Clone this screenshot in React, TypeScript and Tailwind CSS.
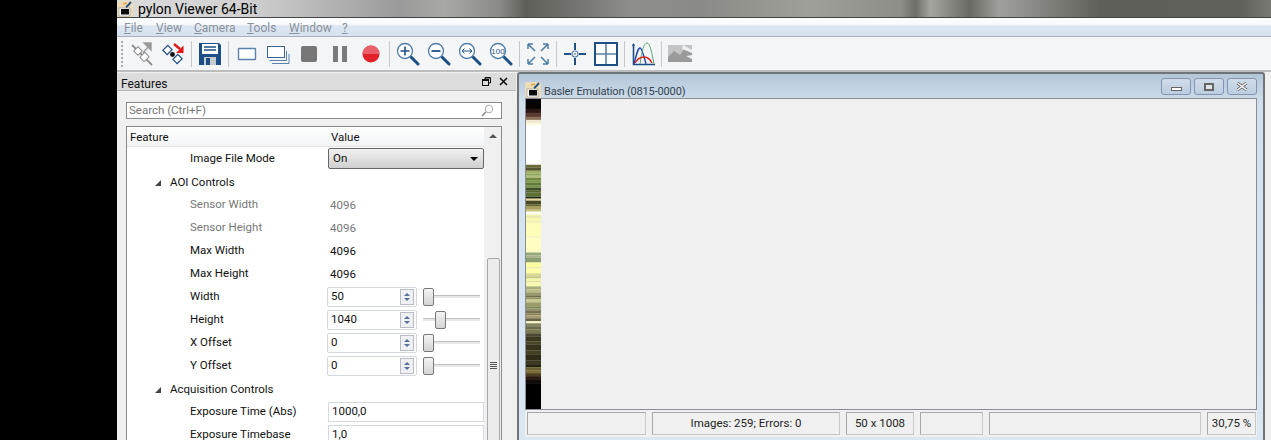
const font = "font-['Roboto','Noto_Sans',sans-serif]";

const stripBands: [number, number, string][] = [
	[0, 10, "#060303"], [10, 4, "#2a1612"], [14, 4, "#5a3a30"], [18, 3, "#8a6e58"], [21, 3, "#f0ead0"], [24, 2, "#fdfbd8"], [26, 40, "#ffffff"],
	[66, 3, "#6b6b3a"], [69, 3, "#55552e"], [72, 3, "#a0b068"], [75, 2, "#8fa458"], [77, 2, "#b0bc78"], [79, 3, "#6f8a40"], [82, 2, "#7f9848"], [84, 3, "#5f7a38"], [87, 2, "#7a9048"],
	[89, 3, "#3f4f25"], [92, 2, "#55652f"], [94, 4, "#5f7035"], [98, 2, "#222a14"], [100, 2, "#e8d8a0"], [102, 4, "#4a4a20"], [106, 2, "#6a6a30"], [108, 3, "#a8a058"], [111, 2, "#c8c078"],
	[113, 3, "#fffff0"], [116, 2, "#f0f2a8"], [118, 1, "#d8dc90"], [119, 4, "#f6f8b0"], [123, 1, "#e8eca0"], [124, 14, "#fdfdb8"], [138, 1, "#f4f4a8"], [139, 15, "#fefec0"],
	[154, 3, "#96a878"], [157, 2, "#a8b488"], [159, 5, "#8a9c70"], [164, 5, "#fbfba0"], [169, 1, "#e8e898"], [170, 5, "#fdfda8"], [175, 3, "#d8d890"], [178, 2, "#c4c884"], [180, 3, "#f4f4a8"], [183, 1, "#d4d48c"], [184, 4, "#f8f8b0"],
	[188, 3, "#a8ae78"], [191, 3, "#bcbc88"], [194, 3, "#969a68"], [197, 2, "#6f7048"], [199, 2, "#8f9060"], [201, 3, "#c8c88f"], [204, 4, "#9a9c68"], [208, 2, "#7c8850"], [210, 2, "#8e9468"],
	[212, 3, "#777050"], [215, 2, "#8a8258"], [217, 3, "#a89c70"], [220, 3, "#6a6448"], [223, 2, "#fafac8"], [225, 3, "#858460"], [228, 3, "#6a6a48"], [231, 4, "#7a7850"], [235, 3, "#4a4830"],
	[238, 5, "#3c3820"], [243, 3, "#4a4628"], [246, 6, "#36321c"], [252, 4, "#444024"], [256, 6, "#302c18"], [262, 4, "#3c3820"], [266, 3, "#24220f"], [269, 3, "#6a6030"], [272, 3, "#7c6c38"], [275, 3, "#4c3e20"], [278, 3, "#2a1a10"], [281, 4, "#120a06"], [285, 26, "#000000"],
];

const Sep = () => <div className="h-[26px] w-px mx-[6px] bg-[#c4c6c8]" />;

const Ic = ({ children }: { children: React.ReactNode }) => (
	<svg width="24" height="24" viewBox="0 0 24 24" fill="none" className="shrink-0">{children}</svg>
);

const ConnectOff = () => (
	<Ic>
		<path d="M2 3l20 20" stroke="#8f8f8f" strokeWidth="1.8" />
		<path d="M13 11l5-6M14 1h7v7z" stroke="#9a9a9a" strokeWidth="1.4" fill="#9a9a9a" />
		<rect x="5" y="6" width="6" height="6" transform="rotate(-45 8 9)" fill="#fff" stroke="#8a8a8a" />
		<rect x="11" y="12" width="7" height="6" transform="rotate(-45 14.5 15)" fill="#fff" stroke="#8a8a8a" />
	</Ic>
);
const ConnectOn = () => (
	<Ic>
		<rect x="3" y="5" width="7" height="6" transform="rotate(-45 6.5 8)" fill="#fff" stroke="#1d4f86" strokeWidth="1.2" />
		<rect x="13" y="14" width="7" height="6" transform="rotate(-45 16.5 17)" fill="#fff" stroke="#1d4f86" strokeWidth="1.2" />
		<circle cx="11.5" cy="12.5" r="2.4" fill="#111" />
		<path d="M13 2l6 5" stroke="#e01818" strokeWidth="2.4" />
		<path d="M22.5 3.5v7.5h-7.5z" fill="#e01818" />
	</Ic>
);
const Save = () => (
	<Ic>
		<path d="M1 1h20l2 2v20H1z" fill="#1c4f86" />
		<rect x="4" y="2" width="16" height="10" fill="#fff" />
		<path d="M6 5h12M6 8h12" stroke="#1c4f86" strokeWidth="1.5" />
		<rect x="6" y="15" width="12" height="8" fill="#c8ccd0" />
		<rect x="8" y="16" width="4" height="7" fill="#1c4f86" />
	</Ic>
);
const SingleRect = () => (
	<Ic><rect x="3.5" y="6.5" width="17" height="11" rx="0.5" fill="#fff" stroke="#5b82ab" strokeWidth="1.4" /></Ic>
);
const MultiRect = () => (
	<Ic>
		<path d="M3.5 18.5h17V9" stroke="#5b82ab" strokeWidth="1" />
		<path d="M6 21.5h17V12" stroke="#5b82ab" strokeWidth="1" />
		<rect x="1.5" y="4.5" width="17" height="11" fill="#fff" stroke="#39638f" />
	</Ic>
);
const Stop = () => <Ic><rect x="4" y="4" width="16" height="16" rx="2" fill="#777" /></Ic>;
const Pause = () => (
	<Ic>
		<rect x="5" y="4" width="5" height="16" fill="#7a7a7a" />
		<rect x="14" y="4" width="5" height="16" fill="#7a7a7a" />
	</Ic>
);
const Record = () => (
	<Ic>
		<circle cx="12" cy="12" r="8.5" fill="#e2212a" />
		<path d="M3.5 12a8.5 8.5 0 0 1 17 0z" fill="#ea5f6a" />
	</Ic>
);
const Lens = ({ children }: { children?: React.ReactNode }) => (
	<Ic>
		<path d="M15 15l7 7" stroke="#1c4f86" strokeWidth="3" strokeLinecap="round" />
		<circle cx="9" cy="9" r="7.5" fill="#fff" stroke="#4d7ca8" strokeWidth="1.3" />
		{children}
	</Ic>
);
const Expand = () => (
	<Ic>
		<g stroke="#4d7ca8" strokeWidth="1.5" fill="none">
			<path d="M2 2l7 7M2 2h5M2 2v5" />
			<path d="M22 2l-7 7M22 2h-5M22 2v5" />
			<path d="M2 22l7-7M2 22h5M2 22v-5" />
			<path d="M22 22l-7-7M22 22h-5M22 22v-5" />
		</g>
	</Ic>
);
const Cross = () => (
	<Ic>
		<path d="M1 12h7M16 12h7M12 1v7M12 16v7" stroke="#1c4f86" strokeWidth="2" />
		<circle cx="12" cy="12" r="3" stroke="#5b82ab" strokeWidth="1.2" />
		<circle cx="12" cy="12" r="0.8" fill="#1c4f86" />
	</Ic>
);
const Grid = () => (
	<Ic>
		<rect x="1" y="1" width="22" height="22" fill="#fff" stroke="#1c4f86" strokeWidth="2" />
		<path d="M12 2v20M2 12h20" stroke="#5b82ab" strokeWidth="1.6" />
	</Ic>
);
const Histogram = () => (
	<Ic>
		<path d="M2.5 2v20.5H24" stroke="#1c4f86" strokeWidth="1.6" />
		<path d="M1 4l1.5-3L4 4z" fill="#1c4f86" />
		<path d="M3 22C6 10 7 6 9 6s4 8 6 16" stroke="#1a3fb0" strokeWidth="1.3" />
		<path d="M9 22C11 8 13 1 16 1s5 10 7 21" stroke="#58a878" strokeWidth="1" />
		<path d="M4 21c3-5 6-6 9-6s6 2 8 6" stroke="#e01818" strokeWidth="1.3" />
	</Ic>
);
const PicDisabled = () => (
	<Ic>
		<rect x="0" y="3" width="24" height="17" fill="#c4c4c4" />
		<path d="M0 15l6-6 6 4 4-6 8 4v9H0z" fill="#9a9a9a" />
		<path d="M15 3l9 5v3l-10-4zM18 14l6-1v4z" fill="#efefef" />
	</Ic>
);
const ProgramIcon = () => (
	<svg width="16" height="16" viewBox="0 0 16 16" className="shrink-0">
		<rect width="16" height="16" rx="2" fill="#ecdcb8" />
		<rect x="2" y="7" width="11" height="8" fill="#fff" stroke="#777" strokeWidth="0.5" />
		<rect x="4" y="8" width="8" height="5.5" fill="#0a0a0a" />
		<path d="M9 6c2-1 3-3 5-5" stroke="#1c4f86" strokeWidth="2" fill="none" />
		<path d="M6 3l4-1" stroke="#e8a040" strokeWidth="1.5" />
	</svg>
);

const MenuItem = ({ k, rest, cls }: { k: string; rest: string; cls: string }) => (
	<span className={cls}><span className="underline">{k}</span>{rest}</span>
);

const Spin = ({ value, pos }: { value: string; pos: string }) => (
	<div className="flex items-center h-full -ml-px">
		<div className="flex items-center justify-between w-[90px] h-[20px] bg-white border border-[#d4d9df] rounded-[2px] pl-[3px] pr-[2px] text-[#111]">
			<span>{value}</span>
			<div className="flex flex-col w-[14px] h-[16px] border border-[#b8bcc4] bg-[#eef0f3] items-center justify-center gap-[2px]">
				<div className="w-0 h-0 border-x-[3px] border-x-transparent border-b-[3px] border-b-[#5a6f99]" />
				<div className="w-0 h-0 border-x-[3px] border-x-transparent border-t-[3px] border-t-[#5a6f99]" />
			</div>
		</div>
		<div className="relative ml-[6px] w-[57px] h-[18px]">
			<div className="absolute left-0 right-0 top-[7px] h-[3px] bg-[#e8e8e8] border-t border-[#c0c0c0]" />
			<div className={`absolute top-0 w-[11px] h-[18px] rounded-[2px] border border-[#777] bg-gradient-to-b from-[#f4f4f4] to-[#d4d4d4] ${pos}`} />
		</div>
	</div>
);

const Row = ({ label, gray, value }: { label: string; gray?: boolean; value?: React.ReactNode }) => (
	<div className="flex h-[23px] items-center">
		<div className={`w-[201px] pl-[63px] shrink-0 whitespace-nowrap ${gray ? "text-[#777]" : "text-[#111]"}`}>{label}</div>
		<div className={`h-full flex items-center ${gray ? "text-[#777]" : "text-[#111]"}`}>{value}</div>
	</div>
);

const Section = ({ label }: { label: string }) => (
	<div className="flex h-[23px] items-center pl-[28px] pt-[2px] gap-[9px] text-[#111]">
		<div className="w-0 h-0 border-l-[6px] border-l-transparent border-b-[6px] border-b-[#444]" />
		<span>{label}</span>
	</div>
);

const Pane = ({ w, children }: { w: string; children?: React.ReactNode }) => (
	<div className={`${w} shrink-0 h-[23px] border border-[#c8c8c8] border-t-[#a8a8a8] border-l-[#a8a8a8] flex items-center justify-center whitespace-nowrap`}>{children}</div>
);

const Input = ({ value }: { value: string }) => (
	<div className="w-[156px] h-[20px] bg-white border border-[#d4d9df] pl-[3px] flex items-center text-[#111]">{value}</div>
);

const winBtn = "w-[30px] h-[17px] rounded-[3px] border border-[#8493b4] bg-gradient-to-b from-[#d0dcea] to-[#bccde0] flex items-center justify-center";

export default function App() {
	return (
		<div className={`flex w-[1271px] h-[440px] overflow-hidden bg-black text-[11.5px] leading-none ${font}`}>
			<div className="w-[117px] shrink-0" />
			<div className="flex-1 flex flex-col min-w-0 bg-[#f0f0f0]">
				{/* Title bar */}
				<div className="h-[17px] flex items-center bg-[linear-gradient(to_right,#dcdcdc,#d0d0d0_11.5%,#9a9a9a_24.5%,#a8a8a4_28.4%,#8a8a86_33.2%,#5f5f5a_35.4%,#7a7a76_41%,#8e8e8a_44.5%,#8a8a86_50.5%,#a0a09a_60%,#8e8e88_67.9%,#6e6e68_69.2%,#a5a5a0_70.5%,#6a6a64_73.9%,#a0a09c_76.5%,#8a8a86_79.5%,#5e5f58_85.2%,#60605a_97.3%,#7a7a75)] border-b border-[#444] box-content">
					<ProgramIcon />
					<span className="ml-[5px] text-[14px] text-black">pylon Viewer 64-Bit</span>
				</div>
				{/* Menu */}
				<div className="h-[19px] flex items-center pl-[7px] pt-px text-[12px] text-[#8b929a] bg-[linear-gradient(#fbfcfe_0,#f8fafc_35%,#dce5f2_45%,#d8e2f0_100%)] border-b border-[#a8b0c0]">
					<MenuItem k="F" rest="ile" cls="w-[32px]" />
					<MenuItem k="V" rest="iew" cls="w-[38px]" />
					<MenuItem k="C" rest="amera" cls="w-[53px]" />
					<MenuItem k="T" rest="ools" cls="w-[42px]" />
					<MenuItem k="W" rest="indow" cls="w-[53px]" />
					<MenuItem k="?" rest="" cls="" />
				</div>
				{/* Toolbar */}
				<div className="h-[33px] flex items-center bg-[#f4f5f6] border-b-2 border-b-[#bcbcbc] box-content">
					<div className="ml-[4px] w-[2px] h-[26px] border-l-2 border-dotted border-[#aaa]" />
					<div className="ml-[7px] flex gap-[7px]"><ConnectOff /><ConnectOn /></div>
					<Sep />
					<Save />
					<Sep />
					<div className="flex gap-[7px]"><SingleRect /><MultiRect /><Stop /><Pause /><Record /></div>
					<Sep />
					<div className="flex gap-[7px]">
						<Lens><path d="M4.5 9h9M9 4.5v9" stroke="#1c4f86" strokeWidth="1.6" /></Lens>
						<Lens><path d="M4.5 9h9" stroke="#1c4f86" strokeWidth="1.8" /></Lens>
						<Lens><path d="M4 9h10M4 9l2.5-2.5M4 9l2.5 2.5M14 9l-2.5-2.5M14 9l-2.5 2.5" stroke="#1c4f86" strokeWidth="1" /></Lens>
						<Lens><text x="9" y="12" textAnchor="middle" fontSize="8" fill="#1c4f86" fontFamily="Liberation Sans, sans-serif">100</text></Lens>
					</div>
					<Sep />
					<Expand />
					<Sep />
					<div className="flex gap-[7px]"><Cross /><Grid /></div>
					<Sep />
					<Histogram />
					<Sep />
					<PicDisabled />
				</div>
				{/* Body */}
				<div className="flex-1 flex min-h-0">
					{/* Features panel */}
					<div className="w-[399px] shrink-0 flex flex-col">
						<div className="mt-px h-[17px] flex items-center justify-between bg-[#dcdcdc] border-b border-[#b8b8b8] pl-[4px] pr-[8px] box-content text-[12px] text-[#111]">
							<span className="pt-[4px]">Features</span>
							<div className="flex items-center gap-[8px]">
								<svg width="9" height="9" viewBox="0 0 9 9" fill="none" stroke="#111"><path d="M3 2.5V.5h5.5V6H6.5" /><rect x="0.5" y="2.5" width="6" height="6" /><path d="M3 1h5M1 3.5h5" /></svg>
								<svg width="9" height="9" viewBox="0 0 9 9" fill="none" stroke="#111" strokeWidth="1.6"><path d="M1 1l7 7M8 1l-7 7" /></svg>
							</div>
						</div>
						<div className="flex-1 flex flex-col pl-[9px] pr-[14px] pt-[11px] min-h-0">
							<div className="h-[17px] bg-white border border-[#8a8a8a] flex items-center justify-between pl-[2px] pr-[7px] text-[#777] shrink-0">
								<span>Search (Ctrl+F)</span>
								<svg width="13" height="13" viewBox="0 0 13 13" fill="none"><circle cx="8" cy="5" r="3.8" stroke="#aaa" /><path d="M5 8l-4 4" stroke="#888" strokeWidth="1.6" /></svg>
							</div>
							<div className="mt-[7px] flex-1 flex bg-[#fff] border border-[#8a8a8a] border-b-0 min-h-0 overflow-hidden">
								<div className="flex-1 min-w-0">
									<div className="h-[20px] flex items-center pt-[2px] bg-gradient-to-b from-[#fff] to-[#f2f4f6] border-b border-[#e4e4e4] text-[#111]">
										<span className="w-[201px] pl-[3px]">Feature</span>
										<span className="pl-[3px]">Value</span>
									</div>
									<Row label="Image File Mode" value={
										<div className="w-[156px] h-[21px] rounded-[2px] border border-[#666] bg-gradient-to-b from-[#f2f2f2] to-[#cfcfcf] flex items-center justify-between pl-[4px] pr-[5px]">
											<span>On</span>
											<div className="w-0 h-0 border-x-[4px] border-x-transparent border-t-[4px] border-t-black" />
										</div>
									} />
									<Section label="AOI Controls" />
									<Row gray label="Sensor Width" value={<span className="pl-[2px] pt-[2px]">4096</span>} />
									<Row gray label="Sensor Height" value={<span className="pl-[2px] pt-[2px]">4096</span>} />
									<Row label="Max Width" value={<span className="pl-[2px] pt-[2px]">4096</span>} />
									<Row label="Max Height" value={<span className="pl-[2px] pt-[2px]">4096</span>} />
									<Row label="Width" value={<Spin value="50" pos="left-0" />} />
									<Row label="Height" value={<Spin value="1040" pos="left-[12px]" />} />
									<Row label="X Offset" value={<Spin value="0" pos="left-0" />} />
									<Row label="Y Offset" value={<Spin value="0" pos="left-0" />} />
									<Section label="Acquisition Controls" />
									<Row label="Exposure Time (Abs)" value={<Input value="1000,0" />} />
									<Row label="Exposure Timebase" value={<Input value="1,0" />} />
								</div>
								{/* Scrollbar */}
								<div className="w-[17px] shrink-0 bg-[#f0f0f0] flex flex-col items-center relative">
									<div className="mt-[7px] w-0 h-0 border-x-[4px] border-x-transparent border-b-[4px] border-b-[#555]" />
									<div className="absolute top-[131px] left-[3px] right-[1px] h-[200px] bg-[#ececec] border border-[#a8a8a8] rounded-[2px] flex flex-col items-center pt-[103px] gap-px">
										<div className="w-[7px] h-px bg-[#555]" />
										<div className="w-[7px] h-px bg-[#555]" />
										<div className="w-[7px] h-px bg-[#555]" />
										<div className="w-[7px] h-px bg-[#555]" />
									</div>
								</div>
							</div>
						</div>
					</div>
					{/* MDI child window */}
					<div className="w-[748px] h-[368px] ml-px flex flex-col bg-[linear-gradient(#b3c6d8,#d2e0ee_30px,#dbe7f3)] border-2 border-b-0 border-[#6f7479] rounded-t-[3px] px-[6px] pb-[3px]">
						<div className="h-[24px] flex items-start shrink-0">
							<div className="mt-[8px] flex items-center">
								<ProgramIcon />
								<span className="ml-[3px] pt-[2px] text-[11px] tracking-[-0.15px] text-[#34424f]">Basler Emulation (0815-0000)</span>
							</div>
							<div className="ml-auto mt-[4px] flex gap-[3px]">
								<div className={winBtn}>
									<div className="w-[11px] h-[4px] mt-[4px] border border-[#666] bg-white" />
								</div>
								<div className={winBtn}>
									<div className="w-[10px] h-[8px] border-2 border-[#666] bg-[#dfe6ee]" />
								</div>
								<div className={winBtn}>
									<svg width="12" height="9" viewBox="0 0 12 9"><path d="M1.5 1l9 7M10.5 1l-9 7" stroke="#666" strokeWidth="3" /><path d="M1.5 1l9 7M10.5 1l-9 7" stroke="#fff" strokeWidth="1.4" /></svg>
								</div>
							</div>
						</div>
						<div className="flex flex-col flex-1 bg-[#f0f0f0] min-h-0">
							<div className="h-[312px] border border-[#8a8e94] flex shrink-0">
								<svg width="15" height="310" viewBox="0 0 15 311" className="shrink-0" preserveAspectRatio="none">
									{stripBands.map(([y, h, c]) => <rect key={y} x="0" y={y} width="15" height={h} fill={c} />)}
								</svg>
							</div>
							<div className="mt-[2px] flex gap-[6px] pl-[2px] text-[#222]">
								<Pane w="w-[119px]" />
								<Pane w="w-[188px]">Images: 259; Errors: 0</Pane>
								<Pane w="w-[68px]">50 x 1008</Pane>
								<Pane w="w-[63px]" />
								<Pane w="w-[212px]" />
								<Pane w="w-[49px]">30,75 %</Pane>
							</div>
						</div>
					</div>
					<div className="flex-1 bg-[#f0f0f0]" />
				</div>
			</div>
		</div>
	);
}
